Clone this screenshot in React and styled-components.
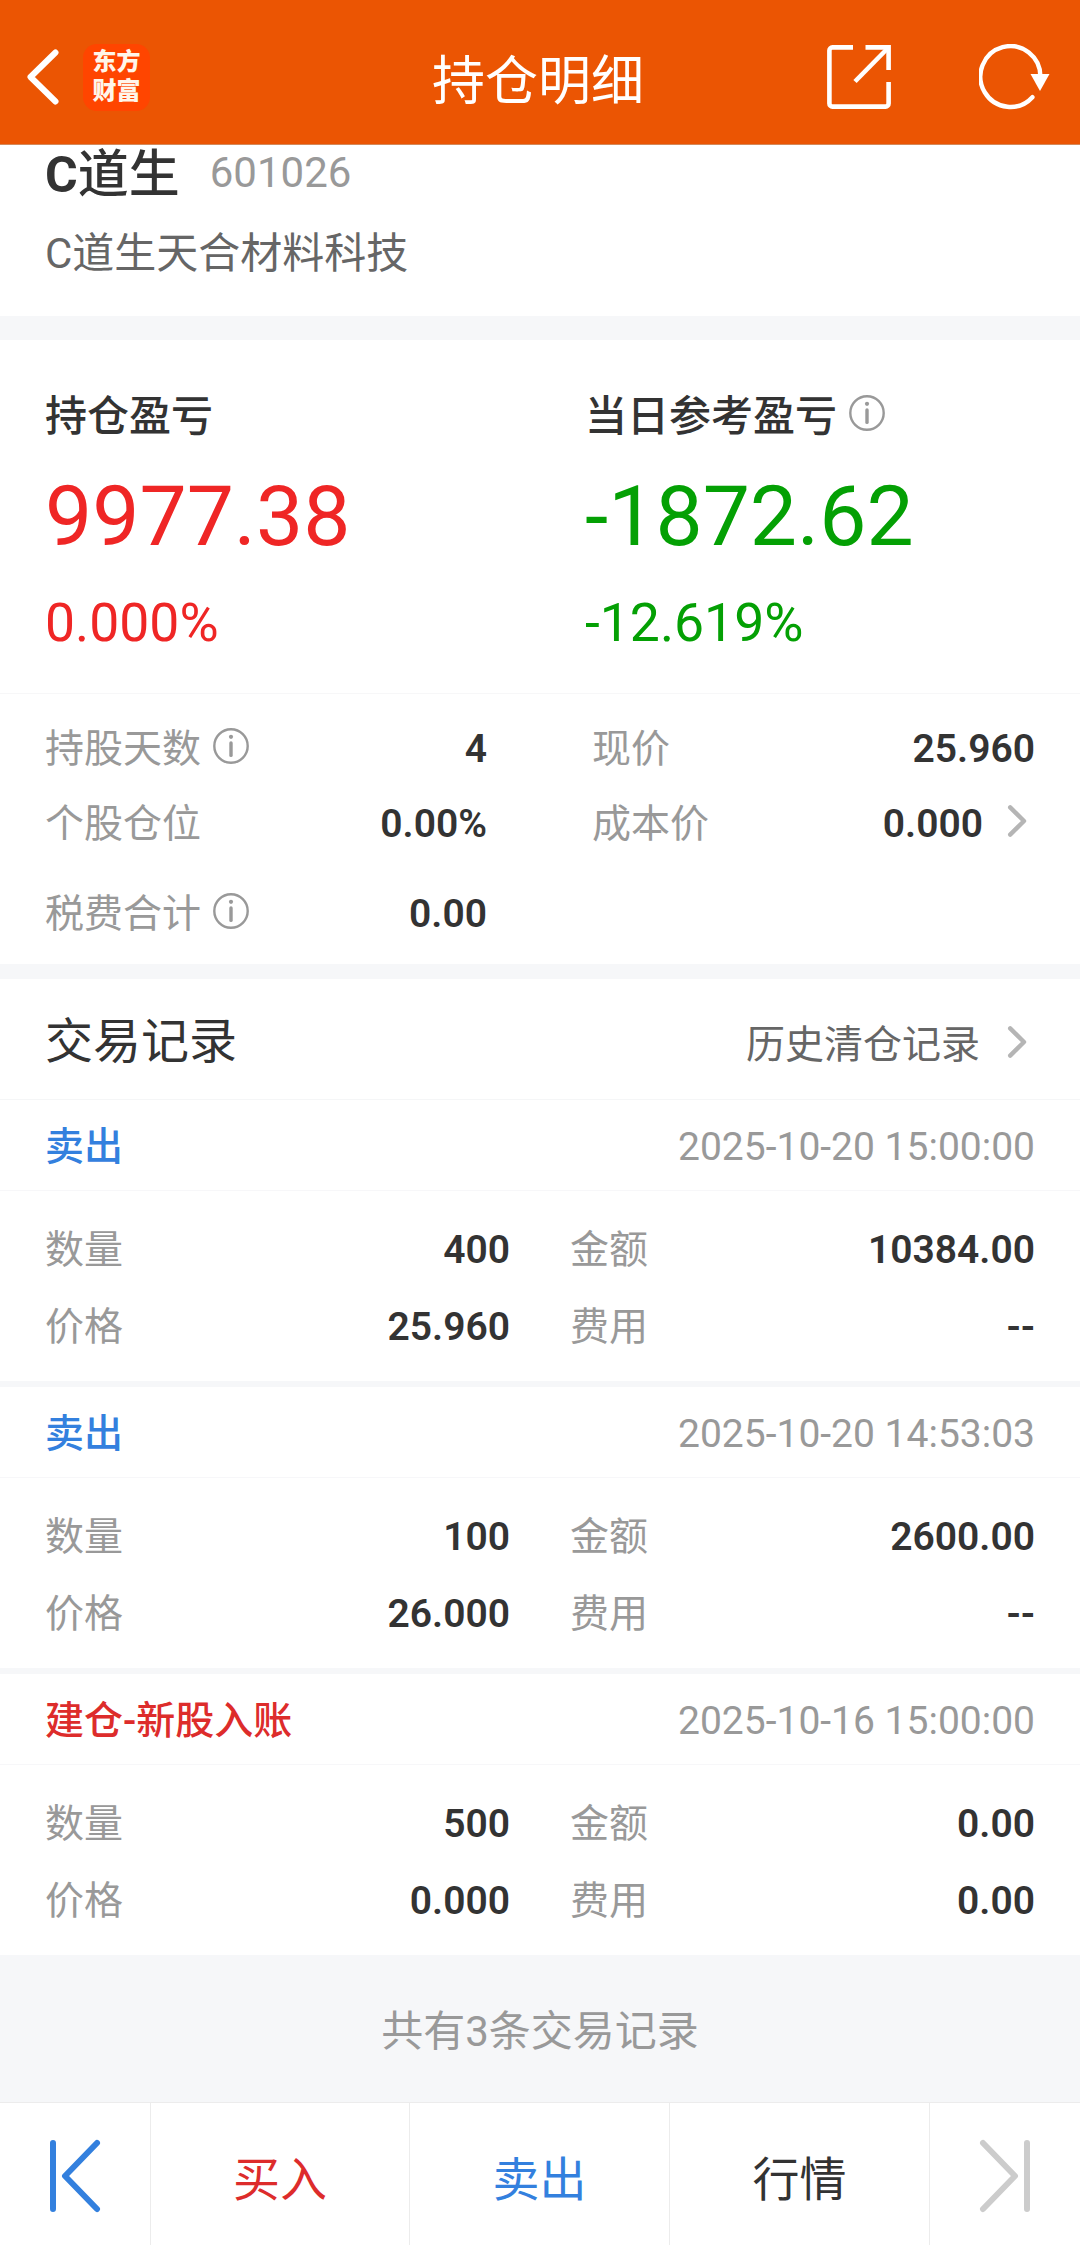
import styled, { createGlobalStyle } from 'styled-components';

const GlobalStyle = createGlobalStyle`
  * {
    box-sizing: border-box;
  }

  body {
    margin: 0;
    background: #f6f7f9;
    color: #333;
    font-family: Roboto, 'Noto Sans CJK SC', sans-serif;
  }
`;

const Page = styled.div`
  width: 1080px;
  height: 2245px;
  display: flex;
  flex-direction: column;
  overflow: hidden;
`;

const Header = styled.header`
  height: 145px;
  flex: none;
  padding: 10px 30px 0 26px;
  display: grid;
  grid-template-columns: 1fr auto 1fr;
  align-items: center;
  background: #eb5503;
  border-bottom: 1px solid #d4895a;
`;

const HeaderSide = styled.div`
  display: flex;
  align-items: center;
  justify-content: ${({ $end }) => ($end ? 'flex-end' : 'flex-start')};
  gap: ${({ $end }) => ($end ? '88px' : '23px')};
`;

const HeaderTitle = styled.h1`
  margin: 0;
  padding-top: 10px;
  color: #fff;
  font-size: 53px;
  line-height: 54px;
  font-weight: 400;
`;

const AppLogo = styled.div`
  width: 67px;
  height: 67px;
  display: flex;
  flex-direction: column;
  align-items: center;
  justify-content: center;
  border-radius: 14px;
  background: #ff4500;
  color: #fff6ea;
`;

const LogoLine = styled.span`
  font-size: 24px;
  line-height: 29px;
  font-weight: 900;
`;

const Section = styled.section`
  flex: none;
  padding: 0 45px;
  background: #fff;
`;

const Band = styled.div`
  flex: none;
  height: ${({ $height }) => $height}px;
`;

const StockSection = styled(Section)`
  height: 171px;
`;

const StockTitle = styled.div`
  height: 55px;
  display: flex;
  align-items: center;
  gap: 30px;
`;

const StockName = styled.span`
  padding-top: 4px;
  font-size: 51px;
  line-height: 55px;
  font-weight: 500;
`;

const StockPrefix = styled.span`
  font-size: 50px;
  font-weight: 700;
`;

const StockCode = styled.span`
  color: #999;
  font-size: 42px;
  line-height: 55px;
`;

const StockFullName = styled.div`
  margin-top: 29px;
  color: #666;
  font-size: 42px;
  line-height: 50px;
`;

const ProfitSection = styled(Section)`
  height: 354px;
  padding-top: 56px;
  display: grid;
  grid-template-columns: 540px 1fr;
  border-bottom: 1px solid #f7f7f8;
`;

const ProfitLabel = styled.div`
  height: 42px;
  display: flex;
  align-items: center;
  gap: 12px;
  font-size: 42px;
  line-height: 42px;
  font-weight: 500;

  svg {
    margin-bottom: 8px;
  }
`;

const ProfitValue = styled.div`
  margin-top: 37px;
  color: ${({ $color }) => $color};
  font-size: 84px;
  line-height: 84px;
`;

const ProfitRate = styled.div`
  margin-top: 37px;
  color: ${({ $color }) => $color};
  font-size: 53.5px;
  line-height: 54px;
`;

const StatSection = styled(Section)`
  height: 270px;
  padding-top: 17px;
`;

const StatRow = styled.div`
  height: 75px;
  margin-top: ${({ $spaced }) => ($spaced ? '15px' : '0')};
  display: grid;
  grid-template-columns: 442px 443px;
  column-gap: 105px;
`;

const Field = styled.div`
  display: flex;
  align-items: center;
  justify-content: space-between;
  font-size: 39px;
  line-height: 40px;
`;

const FieldLabel = styled.span`
  display: flex;
  align-items: center;
  gap: 12px;
  height: 40px;
  color: #999;
`;

const FieldValue = styled.span`
  display: flex;
  align-items: center;
  gap: 24px;
  font-weight: 600;
`;

const TradeHeader = styled(Section)`
  height: 121px;
  padding-top: 5px;
  display: flex;
  align-items: center;
  justify-content: space-between;
  border-bottom: 1px solid #f5f6f7;
`;

const TradeTitle = styled.h2`
  margin: 0;
  font-size: 48px;
  line-height: 48px;
  font-weight: 400;
`;

const HistoryLink = styled.a`
  display: flex;
  align-items: center;
  gap: 27px;
  color: #666;
  font-size: 39px;
  line-height: 40px;
`;

const HistoryText = styled.span`
  padding-top: 6px;
`;

const RecordHead = styled(Section)`
  height: 91px;
  padding-top: 4px;
  display: flex;
  align-items: center;
  justify-content: space-between;
  border-bottom: 1px solid #f7f7f9;
  font-size: 39px;
  line-height: 40px;
`;

const RecordType = styled.span`
  color: ${({ $color }) => $color};
  font-weight: 500;
`;

const RecordTime = styled.time`
  color: #999;
`;

const RecordBody = styled(Section)`
  height: 190px;
  padding-top: 20px;
  display: grid;
  grid-template-columns: 465px 465px;
  grid-auto-rows: 77px;
  column-gap: 60px;
`;

const Summary = styled.div`
  flex: none;
  height: 147px;
  padding-top: 6px;
  display: flex;
  align-items: center;
  justify-content: center;
  color: #999;
  font-size: 42px;
  line-height: 42px;
`;

const BottomBar = styled.nav`
  height: 143px;
  flex: none;
  display: grid;
  grid-template-columns: 151px 259px 260px 260px 150px;
  background: #fff;
  border-top: 1px solid #ececec;
`;

const BarCell = styled.div`
  display: flex;
  align-items: center;
  justify-content: center;
  padding-top: ${({ $icon }) => ($icon ? '4px' : '12px')};
  border-right: 1px solid #ececec;
  color: ${({ $color }) => $color};
  font-size: 47px;
  line-height: 48px;

  &:last-child {
    border-right: none;
  }
`;

// raised slightly so the circle sits level with the Chinese glyphs
const InfoSvg = styled.svg`
  flex: none;
  margin-bottom: 6px;
`;

const ChevronSvg = styled.svg`
  flex: none;
  margin-right: 8px;
  margin-bottom: ${({ $raised }) => ($raised ? '5px' : '0')};
`;

const RED = '#ef2625';
const GREEN = '#04a004';
const BLUE = '#3380de';
const DEEP_RED = '#dd2c2b';

const records = [
  { type: '卖出', color: BLUE, time: '2025-10-20 15:00:00', amount: '400', total: '10384.00', price: '25.960', fee: '--' },
  { type: '卖出', color: BLUE, time: '2025-10-20 14:53:03', amount: '100', total: '2600.00', price: '26.000', fee: '--' },
  { type: '建仓-新股入账', color: DEEP_RED, time: '2025-10-16 15:00:00', amount: '500', total: '0.00', price: '0.000', fee: '0.00' },
];

function InfoIcon() {
  return (
    <InfoSvg width="36" height="36" viewBox="0 0 36 36" fill="none" stroke="#999">
      <circle cx="18" cy="18" r="16.7" strokeWidth="2.4" />
      <circle cx="18" cy="8.8" r="2.1" fill="#999" stroke="none" />
      <path d="M18 15v12.4" strokeWidth="3.4" strokeLinecap="round" />
    </InfoSvg>
  );
}

function Chevron({ raised }) {
  return (
    <ChevronSvg $raised={raised} width="20" height="32" viewBox="0 0 20 32" fill="none" stroke="#b5b5b5" strokeWidth="4.4" strokeLinecap="round" strokeLinejoin="round">
      <path d="M3.2 2.4L17 16L3.2 29.6" />
    </ChevronSvg>
  );
}

function BackIcon() {
  return (
    <svg width="34" height="56" viewBox="0 0 34 56" fill="none" stroke="#fff" strokeWidth="6" strokeLinecap="round" strokeLinejoin="round">
      <path d="M29.5 3.5L4.5 28L29.5 52.5" />
    </svg>
  );
}

function ShareIcon() {
  return (
    <svg width="64" height="64" viewBox="0 0 64 64" fill="none" stroke="#fff" strokeWidth="4.6">
      <path d="M26 2.4H5.4a3 3 0 0 0-3 3V58.6a3 3 0 0 0 3 3H58.6a3 3 0 0 0 3-3V37" />
      <path d="M38.5 2.4H61.6V25" />
      <path d="M61 3L28 36.5" />
    </svg>
  );
}

function RefreshIcon() {
  return (
    <svg width="71" height="66" viewBox="0 0 71 66" fill="none">
      <path d="M61.4 33A30 30.4 0 1 0 53.4 53.2" stroke="#fff" strokeWidth="4.4" strokeLinecap="round" />
      <path d="M51.5 30h19L61 47z" fill="#fff" />
    </svg>
  );
}

function EdgeIcon({ flipped }) {
  return (
    <svg width="52" height="74" viewBox="0 0 52 74" fill="none" stroke="currentColor" strokeWidth="6" strokeLinecap="round" strokeLinejoin="round">
      {flipped ? <path d="M48 4v66M4 4L36 37L4 70" /> : <path d="M4 4v66M48 4L16 37L48 70" />}
    </svg>
  );
}

function LabeledValue({ label, value, info, arrow }) {
  return (
    <Field>
      <FieldLabel>
        {label}
        {info && <InfoIcon />}
      </FieldLabel>
      <FieldValue>
        {value}
        {arrow && <Chevron raised />}
      </FieldValue>
    </Field>
  );
}

function Record({ record }) {
  return (
    <>
      <RecordHead>
        <RecordType $color={record.color}>{record.type}</RecordType>
        <RecordTime>{record.time}</RecordTime>
      </RecordHead>
      <RecordBody>
        <LabeledValue label="数量" value={record.amount} />
        <LabeledValue label="金额" value={record.total} />
        <LabeledValue label="价格" value={record.price} />
        <LabeledValue label="费用" value={record.fee} />
      </RecordBody>
    </>
  );
}

export default function App() {
  return (
    <Page>
      <GlobalStyle />
      <Header>
        <HeaderSide>
          <BackIcon />
          <AppLogo>
            <LogoLine>东方</LogoLine>
            <LogoLine>财富</LogoLine>
          </AppLogo>
        </HeaderSide>
        <HeaderTitle>持仓明细</HeaderTitle>
        <HeaderSide $end>
          <ShareIcon />
          <RefreshIcon />
        </HeaderSide>
      </Header>

      <StockSection>
        <StockTitle>
          <StockName><StockPrefix>C</StockPrefix>道生</StockName>
          <StockCode>601026</StockCode>
        </StockTitle>
        <StockFullName>C道生天合材料科技</StockFullName>
      </StockSection>
      <Band $height={24} />

      <ProfitSection>
        <div>
          <ProfitLabel>持仓盈亏</ProfitLabel>
          <ProfitValue $color={RED}>9977.38</ProfitValue>
          <ProfitRate $color={RED}>0.000%</ProfitRate>
        </div>
        <div>
          <ProfitLabel>
            当日参考盈亏
            <InfoIcon />
          </ProfitLabel>
          <ProfitValue $color={GREEN}>-1872.62</ProfitValue>
          <ProfitRate $color={GREEN}>-12.619%</ProfitRate>
        </div>
      </ProfitSection>

      <StatSection>
        <StatRow>
          <LabeledValue label="持股天数" value="4" info />
          <LabeledValue label="现价" value="25.960" />
        </StatRow>
        <StatRow>
          <LabeledValue label="个股仓位" value="0.00%" />
          <LabeledValue label="成本价" value="0.000" arrow />
        </StatRow>
        <StatRow $spaced>
          <LabeledValue label="税费合计" value="0.00" info />
        </StatRow>
      </StatSection>
      <Band $height={15} />

      <TradeHeader>
        <TradeTitle>交易记录</TradeTitle>
        <HistoryLink>
          <HistoryText>历史清仓记录</HistoryText>
          <Chevron />
        </HistoryLink>
      </TradeHeader>
      {records.map((record, index) => (
        <div key={record.time}>
          {index > 0 && <Band $height={6} />}
          <Record record={record} />
        </div>
      ))}

      <Summary>共有3条交易记录</Summary>

      <BottomBar>
        <BarCell $icon $color={BLUE}><EdgeIcon /></BarCell>
        <BarCell $color={DEEP_RED}>买入</BarCell>
        <BarCell $color={BLUE}>卖出</BarCell>
        <BarCell $color="#333">行情</BarCell>
        <BarCell $icon $color="#ccc"><EdgeIcon flipped /></BarCell>
      </BottomBar>
    </Page>
  );
}
